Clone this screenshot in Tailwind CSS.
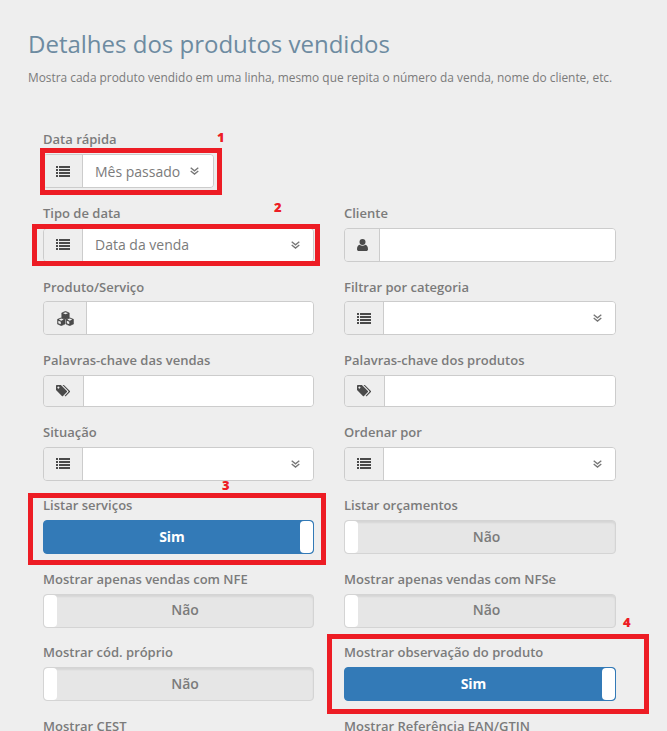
<!DOCTYPE html>
<html lang="pt-BR">
<head>
  <meta charset="UTF-8" />
  <meta name="viewport" content="width=device-width, initial-scale=1.0"/>
  <title>Detalhes dos produtos vendidos</title>
  <script src="https://cdn.jsdelivr.net/npm/@tailwindcss/browser@4"></script>
</head>
<body class="bg-[#eeeeee] font-['Open_Sans',sans-serif] text-[#7b7b7b]">
  <svg class="hidden">
    <symbol id="list" viewBox="0 0 14 11"><path d="M0 0h2v2H0zM3 0h11v2H3zM0 3h2v2H0zM3 3h11v2H3zM0 6h2v2H0zM3 6h11v2H3zM0 9h2v2H0zM3 9h11v2H3z" fill="#4a4a4a"/></symbol>
    <symbol id="chev" viewBox="0 0 9 8"><path d="M.7 .7 4.5 3.8 8.3 .7M.7 4 4.5 7.1 8.3 4" fill="none" stroke="#777" stroke-width="1.3"/></symbol>
    <symbol id="tags" viewBox="0 0 15 12"><path d="M0 .8C0 .3.3 0 .8 0h4.1l6 6c.3.3.3.8 0 1.1l-3.9 3.9c-.3.3-.8.3-1.1 0L0 5zM2.4 1.5a1 1 0 1 0 .01 0z" fill="#4a4a4a" fill-rule="evenodd"/><path d="M6.5 0h1.4l6 6c.3.3.3.8 0 1.1L10 11c-.3.3-.8.3-1.1 0l-.2-.2 3.6-3.7c.3-.3.3-.8 0-1.1z" fill="#4a4a4a"/></symbol>
    <symbol id="user" viewBox="0 0 11 12"><circle cx="5.5" cy="3" r="3" fill="#4a4a4a"/><path d="M0 10.2C0 7.8 1 6.2 2.6 5.7c.8.7 1.8 1 2.9 1s2.1-.3 2.9-1C10 6.2 11 7.8 11 10.2 11 11.3 10.3 12 9.2 12H1.8C.7 12 0 11.3 0 10.2z" fill="#4a4a4a"/></symbol>
    <symbol id="cubes" viewBox="0 0 18 14" preserveAspectRatio="none"><g fill="#4a4a4a" stroke="#4a4a4a" stroke-width=".5"><path d="M9 .3 13 1.8V6.200L9 7.700 5 6.200V1.800z"/><path d="M4.500 6.300 8.500 7.800V12.200L4.500 13.700 .5 12.200V7.800z"/><path d="M13.500 6.300 17.500 7.800V12.200L13.500 13.700 9.500 12.200V7.800z"/></g><path d="M6.400 2 9 3 11.600 2 9 1.100zM1.900 8 4.500 9 7.100 8 4.500 7.100zM10.900 8 13.500 9 16.100 8 13.500 7.100zM1.400 9 4 10V12.300L1.400 11.400zM10.400 9 13 10V12.300L10.400 11.400z" fill="#eee"/></symbol>
  </svg>

  <div class="relative h-[731px] overflow-hidden">
    <div class="pl-[28px] pt-[28px]">
      <h1 class="text-[24px] leading-[32px] font-normal text-[#6d8ba1]">Detalhes dos produtos vendidos</h1>
      <p class="mt-[8px] text-[11.9px] leading-[18px]">Mostra cada produto vendido em uma linha, mesmo que repita o número da venda, nome do cliente, etc.</p>
    </div>

    <div class="grid grid-cols-[271px_272px] gap-x-[30px] ml-[43px] mt-[43px] text-[13px] font-semibold">
      <div class="col-span-2 h-[73.5px]">
        <label class="block h-5 leading-5 mb-[5px]">Data rápida</label>
        <div class="flex w-[171px] h-[34px] rounded border border-[#cccccc] overflow-hidden">
          <span class="w-[39px] shrink-0 flex items-center justify-center bg-[#eeeeee] border-r border-[#cccccc]"><svg class="w-[14px] h-[11px]"><use href="#list"/></svg></span>
          <div class="flex-1 bg-white flex items-center justify-between pl-3 pr-[14px] text-[14px] font-normal"><span>Mês passado</span><svg class="w-[9px] h-[8px]"><use href="#chev"/></svg></div>
        </div>
      </div>

      <div class="h-[73.5px]">
        <label class="block h-5 leading-5 mb-[5px]">Tipo de data</label>
        <div class="flex h-[34px] rounded border border-[#cccccc] overflow-hidden">
          <span class="w-[39px] shrink-0 flex items-center justify-center bg-[#eeeeee] border-r border-[#cccccc]"><svg class="w-[14px] h-[11px]"><use href="#list"/></svg></span>
          <div class="flex-1 bg-white flex items-center justify-between pl-3 pr-[13px] text-[14px] font-normal"><span>Data da venda</span><svg class="w-[9px] h-[8px]"><use href="#chev"/></svg></div>
        </div>
      </div>
      <div class="h-[73.5px]">
        <label class="block h-5 leading-5 mb-[5px]">Cliente</label>
        <div class="flex h-[34px] rounded border border-[#cccccc] overflow-hidden">
          <span class="w-[35px] shrink-0 flex items-center justify-center bg-[#eeeeee] border-r border-[#cccccc]"><svg class="w-[11px] h-[12px]"><use href="#user"/></svg></span>
          <div class="flex-1 bg-white"></div>
        </div>
      </div>

      <div class="h-[73.5px]">
        <label class="block h-5 leading-5 mb-[5px] pt-px">Produto/Serviço</label>
        <div class="flex h-[34px] rounded border border-[#cccccc] overflow-hidden">
          <span class="w-[43px] shrink-0 flex items-center justify-center bg-[#eeeeee] border-r border-[#cccccc]"><svg class="w-[17px] h-[15px]"><use href="#cubes"/></svg></span>
          <div class="flex-1 bg-white"></div>
        </div>
      </div>
      <div class="h-[73.5px]">
        <label class="block h-5 leading-5 mb-[5px] pt-px">Filtrar por categoria</label>
        <div class="flex h-[34px] rounded border border-[#cccccc] overflow-hidden">
          <span class="w-[39px] shrink-0 flex items-center justify-center bg-[#eeeeee] border-r border-[#cccccc]"><svg class="w-[14px] h-[11px]"><use href="#list"/></svg></span>
          <div class="flex-1 bg-white flex items-center justify-end pr-[13px]"><svg class="w-[9px] h-[8px]"><use href="#chev"/></svg></div>
        </div>
      </div>

      <div class="h-[72px]">
        <label class="block h-5 leading-5 mb-[5px]">Palavras-chave das vendas</label>
        <div class="flex h-[32px] rounded border border-[#cccccc] overflow-hidden">
          <span class="w-[40px] shrink-0 flex items-center justify-center bg-[#eeeeee] border-r border-[#cccccc]"><svg class="w-[15px] h-[12px]"><use href="#tags"/></svg></span>
          <div class="flex-1 bg-white"></div>
        </div>
      </div>
      <div class="h-[72px]">
        <label class="block h-5 leading-5 mb-[5px]">Palavras-chave dos produtos</label>
        <div class="flex h-[32px] rounded border border-[#cccccc] overflow-hidden">
          <span class="w-[40px] shrink-0 flex items-center justify-center bg-[#eeeeee] border-r border-[#cccccc]"><svg class="w-[15px] h-[12px]"><use href="#tags"/></svg></span>
          <div class="flex-1 bg-white"></div>
        </div>
      </div>

      <div class="h-[73.5px]">
        <label class="block h-5 leading-5 mb-[5px]">Situação</label>
        <div class="flex h-[34px] rounded border border-[#cccccc] overflow-hidden">
          <span class="w-[39px] shrink-0 flex items-center justify-center bg-[#eeeeee] border-r border-[#cccccc]"><svg class="w-[14px] h-[11px]"><use href="#list"/></svg></span>
          <div class="flex-1 bg-white flex items-center justify-end pr-[13px]"><svg class="w-[9px] h-[8px]"><use href="#chev"/></svg></div>
        </div>
      </div>
      <div class="h-[73.5px]">
        <label class="block h-5 leading-5 mb-[5px]">Ordenar por</label>
        <div class="flex h-[34px] rounded border border-[#cccccc] overflow-hidden">
          <span class="w-[39px] shrink-0 flex items-center justify-center bg-[#eeeeee] border-r border-[#cccccc]"><svg class="w-[14px] h-[11px]"><use href="#list"/></svg></span>
          <div class="flex-1 bg-white flex items-center justify-end pr-[13px]"><svg class="w-[9px] h-[8px]"><use href="#chev"/></svg></div>
        </div>
      </div>

      <div class="h-[73.5px]">
        <label class="block h-5 leading-5 mb-[5px]">Listar serviços</label>
        <div class="flex h-[34px] rounded border border-[#337ab7] bg-[#337ab7] overflow-hidden">
          <span class="flex-1 flex items-center justify-center pb-[2px] text-white text-[14px] font-bold">Sim</span>
          <span class="w-[13px] bg-white rounded"></span>
        </div>
      </div>
      <div class="h-[73.5px]">
        <label class="block h-5 leading-5 mb-[5px]">Listar orçamentos</label>
        <div class="flex h-[34px] rounded border border-[#d4d4d4] bg-[#e6e6e6] shadow-[inset_0_2px_2px_rgba(0,0,0,0.07)] overflow-hidden">
          <span class="w-[13px] bg-white rounded"></span>
          <span class="flex-1 flex items-center justify-center pb-[2px] text-[14px]">Não</span>
        </div>
      </div>

      <div class="h-[73.5px]">
        <label class="block h-5 leading-5 mb-[5px]">Mostrar apenas vendas com NFE</label>
        <div class="flex h-[34px] rounded border border-[#d4d4d4] bg-[#e6e6e6] shadow-[inset_0_2px_2px_rgba(0,0,0,0.07)] overflow-hidden">
          <span class="w-[13px] bg-white rounded"></span>
          <span class="flex-1 flex items-center justify-center pb-[2px] text-[14px]">Não</span>
        </div>
      </div>
      <div class="h-[73.5px]">
        <label class="block h-5 leading-5 mb-[5px]">Mostrar apenas vendas com NFSe</label>
        <div class="flex h-[34px] rounded border border-[#d4d4d4] bg-[#e6e6e6] shadow-[inset_0_2px_2px_rgba(0,0,0,0.07)] overflow-hidden">
          <span class="w-[13px] bg-white rounded"></span>
          <span class="flex-1 flex items-center justify-center pb-[2px] text-[14px]">Não</span>
        </div>
      </div>

      <div class="h-[73.5px]">
        <label class="block h-5 leading-5 mb-[5px]">Mostrar cód. próprio</label>
        <div class="flex h-[34px] rounded border border-[#d4d4d4] bg-[#e6e6e6] shadow-[inset_0_2px_2px_rgba(0,0,0,0.07)] overflow-hidden">
          <span class="w-[13px] bg-white rounded"></span>
          <span class="flex-1 flex items-center justify-center pb-[2px] text-[14px]">Não</span>
        </div>
      </div>
      <div class="h-[73.5px]">
        <label class="block h-5 leading-5 mb-[5px]">Mostrar observação do produto</label>
        <div class="flex h-[34px] rounded border border-[#337ab7] bg-[#337ab7] overflow-hidden">
          <span class="flex-1 flex items-center justify-center pb-[2px] text-white text-[14px] font-bold">Sim</span>
          <span class="w-[13px] bg-white rounded"></span>
        </div>
      </div>

      <div><label class="block h-5 leading-5">Mostrar CEST</label></div>
      <div><label class="block h-5 leading-5">Mostrar Referência EAN/GTIN</label></div>
    </div>

    <!-- marcacoes vermelhas -->
    <div class="absolute left-[40px] top-[148px] w-[182px] h-[47px] border-[5px] border-[#ed1c24]"></div>
    <div class="absolute left-[32px] top-[224px] w-[288px] h-[42px] border-[5px] border-[#ed1c24]"></div>
    <div class="absolute left-[28px] top-[493px] w-[298px] h-[72px] border-[5px] border-[#ed1c24]"></div>
    <div class="absolute left-[327px] top-[634px] w-[322px] h-[80px] border-[5px] border-[#ed1c24]"></div>
    <span class="absolute left-[217px] top-[128px] text-[13px] leading-[18px] font-extrabold text-[#ed1c24]">1</span>
    <span class="absolute left-[274px] top-[198px] text-[13px] leading-[18px] font-extrabold text-[#ed1c24]">2</span>
    <span class="absolute left-[222px] top-[476px] text-[13px] leading-[18px] font-extrabold text-[#ed1c24]">3</span>
    <span class="absolute left-[623px] top-[613px] text-[13px] leading-[18px] font-extrabold text-[#ed1c24]">4</span>
  </div>
</body>
</html>
